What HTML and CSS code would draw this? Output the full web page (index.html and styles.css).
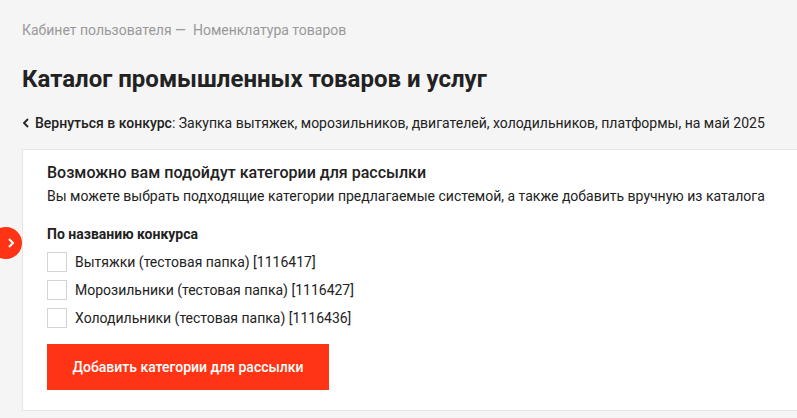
FILE: index.html
```html
<!DOCTYPE html>
<html lang="ru">
<head>
<meta charset="utf-8">
<link rel="stylesheet" href="styles.css">
</head>
<body>
<div class="page">
  <nav class="crumbs">Кабинет пользователя —&nbsp; Номенклатура товаров</nav>
  <h1 class="title">Каталог промышленных товаров и услуг</h1>
  <div class="back">
    <svg class="back-icon" width="8" height="10" viewBox="0 0 8 10"><path d="M6 1 L2 5 L6 9" fill="none" stroke="#222" stroke-width="1.8"/></svg>
    <span><b>Вернуться в конкурс</b>: Закупка вытяжек, морозильников, двигателей, холодильников, платформы, на май 2025</span>
  </div>
  <section class="card">
    <h2 class="card-title">Возможно вам подойдут категории для рассылки</h2>
    <p class="card-sub">Вы можете выбрать подходящие категории предлагаемые системой, а также добавить вручную из каталога</p>
    <h3 class="group">По названию конкурса</h3>
    <ul class="list">
      <li class="item"><span class="box"></span>Вытяжки (тестовая папка) [1116417]</li>
      <li class="item"><span class="box"></span>Морозильники (тестовая папка) [1116427]</li>
      <li class="item"><span class="box"></span>Холодильники (тестовая папка) [1116436]</li>
    </ul>
    <button class="btn">Добавить категории для рассылки</button>
  </section>
</div>
<button class="side-toggle">
  <svg width="8" height="12" viewBox="0 0 8 12"><path d="M2 2 L6 6 L2 10" fill="none" stroke="#fff" stroke-width="2"/></svg>
</button>
</body>
</html>
```
FILE: styles.css
```css
html, body {
  margin: 0;
  padding: 0;
  background: #f5f5f5;
  overflow: hidden;
}
body {
  font-family: Roboto, "Liberation Sans", sans-serif;
  color: #222;
  width: 797px;
  height: 418px;
  position: relative;
}
.page {
  padding: 21px 0 0 22px;
}
.crumbs {
  font-size: 14px;
  line-height: 18px;
  color: #999;
}
.title {
  margin: 24px 0 0;
  font-size: 24px;
  line-height: 32px;
  font-weight: 700;
  color: #222;
}
.back {
  margin-top: 19px;
  display: flex;
  align-items: center;
  gap: 5px;
  font-size: 14px;
  line-height: 18px;
  color: #222;
  white-space: nowrap;
}
.back b {
  font-weight: 500;
}
.back-icon {
  flex: none;
}
.card {
  margin-top: 17px;
  background: #fff;
  border: 1px solid #e6e6e6;
  border-right: 0;
  padding: 12px 0 20px 24px;
}
.card-title {
  margin: 0;
  font-size: 16px;
  line-height: 22px;
  font-weight: 500;
}
.card-sub {
  margin: 3px 0 0;
  font-size: 14px;
  line-height: 18px;
  white-space: nowrap;
}
.group {
  margin: 20px 0 0;
  font-size: 14px;
  line-height: 18px;
  font-weight: 700;
}
.list {
  list-style: none;
  margin: 9px 0 0;
  padding: 0;
  display: flex;
  flex-direction: column;
  gap: 8px;
}
.item {
  display: flex;
  align-items: center;
  gap: 8px;
  font-size: 14px;
  line-height: 20px;
}
.box {
  width: 18px;
  height: 18px;
  border: 1px solid #d5d5d5;
  background: #fff;
  flex: none;
}
.btn {
  display: block;
  margin-top: 16px;
  width: 282px;
  height: 46px;
  border: 0;
  background: #ff3414;
  color: #fff;
  font-family: Roboto, "Liberation Sans", sans-serif;
  font-size: 14px;
  font-weight: 500;
  padding: 0;
}
.side-toggle {
  position: absolute;
  left: -10px;
  top: 227px;
  width: 32px;
  height: 32px;
  border-radius: 50%;
  border: 0;
  background: #ff3414;
  padding: 0 0 0 10px;
  display: flex;
  align-items: center;
  justify-content: center;
}
```
